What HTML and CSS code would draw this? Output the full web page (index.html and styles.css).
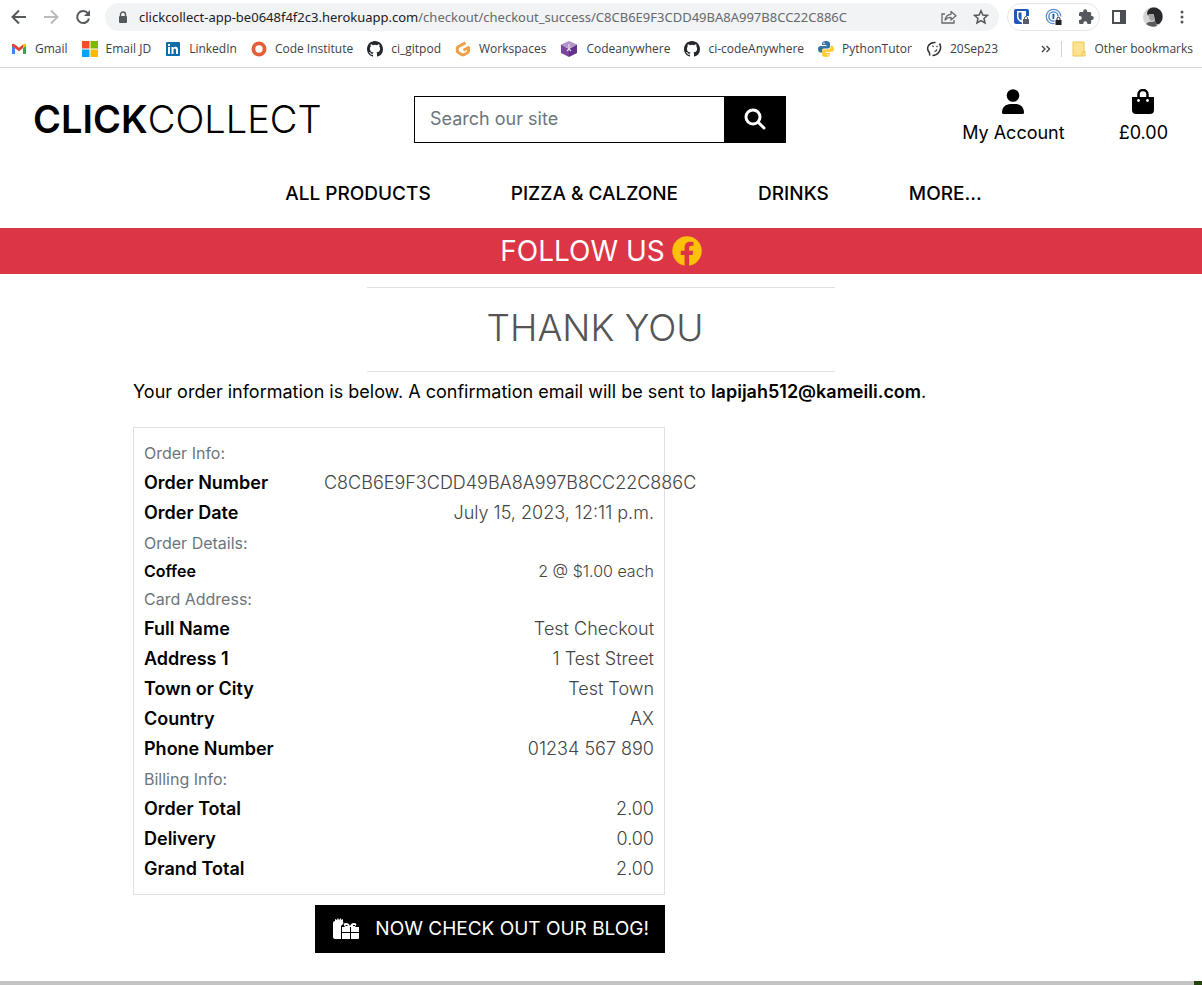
FILE: index.html
```html
<!DOCTYPE html>
<html lang="en">
<head>
<meta charset="utf-8">
<meta name="viewport" content="width=device-width, initial-scale=1">
<title>Click Collect - Checkout success</title>
<link rel="stylesheet" href="styles.css">
</head>
<body>
<div class="browser">
  <div class="toolbar">
    <div class="nav-buttons">
      <button type="button" class="tool" aria-label="Back"><svg width="16" height="16" viewBox="0 0 16 16" fill="none" stroke="#55585c" stroke-width="2"><path d="M15 8H2M8 1.500L1.500 8L8 14.500"/></svg></button>
      <button type="button" class="tool" aria-label="Forward"><svg width="16" height="16" viewBox="0 0 16 16" fill="none" stroke="#b9bbbe" stroke-width="2"><path d="M1 8H14M8 1.500L14.500 8L8 14.500"/></svg></button>
      <button type="button" class="tool" aria-label="Reload"><svg width="16" height="16" viewBox="0 0 16 16"><path d="M13 4.500A6 6 0 1 0 14 9.500" fill="none" stroke="#55585c" stroke-width="2"/><path d="M15 1V7H9Z" fill="#55585c"/></svg></button>
    </div>
    <div class="address">
      <svg width="10" height="13" viewBox="0 0 10 13"><rect x="1" y="5" width="8" height="7" rx="1" fill="#55585c"/><path d="M2.500 6V3.500a2.500 2.500 0 0 1 5 0V6" fill="none" stroke="#55585c" stroke-width="1.400"/></svg>
      <span class="url"><span class="host">clickcollect-app-be0648f4f2c3.herokuapp.com</span>/checkout/checkout_success/C8CB6E9F3CDD49BA8A997B8CC22C886C</span>
      <button type="button" class="tool" aria-label="Share"><svg width="16" height="16" viewBox="0 0 16 16" fill="none" stroke="#66696d" stroke-width="1.300"><path d="M4 5H1V14H13V11"/><path d="M4 11C4.500 7.500 6.500 5.500 10 5.300V2.500L15 6.800L10 11V8.300C7.500 8.300 5.500 9 4 11Z" stroke-linejoin="round"/></svg></button>
      <button type="button" class="tool" aria-label="Bookmark this page"><svg width="16" height="16" viewBox="0 0 16 16" fill="none" stroke="#55585c" stroke-width="1.500"><path d="M8 1.800L9.900 6L14.400 6.400L11 9.400L12 13.900L8 11.500L4 13.900L5 9.400L1.600 6.400L6.100 6Z"/></svg></button>
    </div>
    <div class="extensions">
      <button type="button" class="tool" aria-label="Bitwarden"><svg width="18" height="18" viewBox="0 0 18 18"><rect x="1" y="1" width="15" height="15" rx="2" fill="#2456b4"/><path d="M4 3H13V9Q13 12 8.500 14.500Q4 12 4 9Z" fill="#fff"/><path d="M5.500 4.500H8.500V12.500Q5.500 11 5.500 9Z" fill="#2456b4"/><rect x="9" y="8" width="8" height="9" fill="#fff"/><rect x="10" y="11" width="6" height="5" fill="#555b68"/><path d="M11.500 11V10a1.500 1.500 0 0 1 3 0V11" fill="none" stroke="#555b68"/></svg></button>
      <button type="button" class="tool" aria-label="1Password"><svg width="18" height="18" viewBox="0 0 18 18"><circle cx="8.500" cy="8.500" r="7.200" fill="#fff" stroke="#5b8fd0" stroke-width="1.300"/><circle cx="8.500" cy="8.500" r="4.600" fill="#fff" stroke="#3c7cca" stroke-width="1.300"/><path d="M8.500 5.800V11" stroke="#1c57a0" stroke-width="2"/><rect x="9.500" y="8.500" width="8" height="9" fill="#fff"/><rect x="10.500" y="12" width="6" height="5" fill="#202124"/><path d="M12 12V10.800a1.500 1.500 0 0 1 3 0V12" fill="none" stroke="#202124"/></svg></button>
      <button type="button" class="tool" aria-label="Extensions"><svg width="18" height="18" viewBox="0 0 18 18" fill="#55585c"><path d="M2 5.500Q2 4 3.500 4H6.200V3.200A2 2 0 0 1 10.200 3.200V4H13Q14.200 4 14.200 5.500V8H14.800A2 2 0 0 1 14.800 12H14.200V14.500Q14.200 16 13 16H10.300V15.200A2 2 0 0 0 6.300 15.200V16H3.500Q2 16 2 14.500V12H2.800A2 2 0 0 0 2.800 8H2Z"/></svg></button>
    </div>
    <div class="window-tools">
      <button type="button" class="tool" aria-label="Side panel"><svg width="14" height="14" viewBox="0 0 14 14"><rect x="1" y="1" width="12" height="12" fill="#fff" stroke="#4b4e52" stroke-width="2"/><path d="M8 1H13V13H8Z" fill="#4b4e52"/></svg></button>
      <button type="button" class="tool" aria-label="Profile"><svg width="20" height="20" viewBox="0 0 20 20"><circle cx="10" cy="10" r="10" fill="#d6d6d6"/><path d="M4 6Q5 1 10 0.500Q16 0 19 6Q21 13 16 17Q13 18 12 14L10.500 7L6 7L5 9Z" fill="#29292b"/><path d="M6 7L10.500 7L12 12L9 14Q6 13 6 10Z" fill="#a3a3a3"/><path d="M3 17Q6 14 9 15L12 14L14 19Q8 21 3 17Z" fill="#5c5c5c"/></svg></button>
      <button type="button" class="tool" aria-label="Menu"><svg width="4" height="14" viewBox="0 0 4 14" fill="#55585c"><circle cx="2" cy="2" r="1.500"/><circle cx="2" cy="7" r="1.500"/><circle cx="2" cy="12" r="1.500"/></svg></button>
    </div>
  </div>
  <nav class="bookmarks" aria-label="Bookmarks">
    <a href="#"><svg width="16" height="16" viewBox="0 0 16 16"><path d="M1 3.500V13H4V7Z" fill="#4285f4"/><path d="M15 3.500V13H12V7Z" fill="#34a853"/><path d="M1 3.500Q2 2 4 3.500L8 6.800L12 3.500V7L8 10.300L1 5Z" fill="#e04335"/><path d="M12 3.500Q14 2 15 3.500V5L12 7.300Z" fill="#fbbc04"/></svg>Gmail</a>
    <a href="#"><svg width="16" height="16" viewBox="0 0 16 16"><path d="M0 0H7.500V7.500H0Z" fill="#f25022"/><path d="M8.500 0H16V7.500H8.500Z" fill="#7fba00"/><path d="M0 8.500H7.500V16H0Z" fill="#00a4ef"/><path d="M8.500 8.500H16V16H8.500Z" fill="#ffb900"/></svg>Email JD</a>
    <a href="#"><svg width="16" height="16" viewBox="0 0 16 16"><rect x="1" y="1" width="14" height="14" rx="1" fill="#0a6fa8"/><path d="M3 6H5V13H3ZM3 3H5V5H3ZM6.500 6H8.500V7Q9.200 5.800 10.600 5.800Q13 5.800 13 8.800V13H11V9.200Q11 7.600 9.900 7.600Q8.500 7.600 8.500 9.300V13H6.500Z" fill="#fff"/></svg>LinkedIn</a>
    <a href="#"><svg width="16" height="16" viewBox="0 0 16 16"><circle cx="8" cy="8" r="5.600" fill="none" stroke="#e25f38" stroke-width="3.800"/></svg>Code Institute</a>
    <a href="#"><svg width="16" height="16" viewBox="0 0 16 16"><use href="#octocat"/></svg>ci_gitpod</a>
    <a href="#"><svg width="16" height="16" viewBox="0 0 16 16"><path d="M10.500 1.800L3.500 5.500Q2.300 6.200 2.300 7.500V10Q2.300 11 3.300 11.500L7 13.700Q8 14.200 9 13.700L12.500 11.700Q13.500 11 13.500 10V6.500L8.500 9.300" fill="none" stroke="#eda04c" stroke-width="3" stroke-linejoin="round"/></svg>Workspaces</a>
    <a href="#"><svg width="18" height="16" viewBox="0 0 18 16"><path d="M9 0L17 3.500L9 7.500L1 3.500Z" fill="#b394c8"/><path d="M1 3.500L9 8V16L1 12Z" fill="#7c459c"/><path d="M17 3.500L9 8V16L17 12Z" fill="#63318a"/><path d="M9 3V9M9 8L7 10M9 8L11 10" stroke="#e6dbee" stroke-width="1.200"/></svg>Codeanywhere</a>
    <a href="#"><svg width="16" height="16" viewBox="0 0 16 16"><use href="#octocat"/></svg>ci-codeAnywhere</a>
    <a href="#"><svg width="16" height="16" viewBox="0 0 16 16"><path d="M8 0Q4 0 4 2.500V4H8.500V5H3Q0 5 0 8Q0 11.500 3 11.500H4V9.500Q4 7.500 6 7.500H10Q12 7.500 12 5.500V2.500Q12 0 8 0Z" fill="#3571a3"/><path d="M8 16Q12 16 12 13.500V12H7.500V11H13Q16 11 16 8Q16 4.500 13 4.500H12.500V6.500Q12.500 8.300 10.500 8.300H6Q4 8.300 4 10.500V13.500Q4 16 8 16Z" fill="#ffce3c"/><circle cx="6" cy="2.200" r=".8" fill="#fff"/><circle cx="10" cy="13.800" r=".8" fill="#fff"/></svg>PythonTutor</a>
    <a href="#"><svg width="16" height="16" viewBox="0 0 16 16" fill="none" stroke="#303236" stroke-width="1.500"><path d="M9.500 1.500Q5 1 2.500 4.500Q0.500 8 3 11Q4 12.500 3.500 14.500"/><path d="M13.500 2.500Q16 6.500 13 11Q10.500 14.500 6.500 14.500"/><path d="M6.500 4.500L7.500 6M10.500 5L11.500 6M8.500 10.500Q10.500 10 11 8.500" stroke-width="1.100"/></svg>20Sep23</a>
    <button type="button" class="more-bookmarks" aria-label="More bookmarks"><svg width="10" height="10" viewBox="0 0 10 10" fill="none" stroke="#44474b" stroke-width="1.400"><path d="M1 2L4 5L1 8M5.500 2L8.500 5L5.500 8"/></svg></button>
    <a href="#" class="other"><svg width="14" height="16" viewBox="0 0 14 16"><path d="M1 1H12V10H13V15H1Z" fill="#fde293" stroke="#edc852"/><path d="M10 15V11H13" fill="none" stroke="#edc852"/></svg>Other bookmarks</a>
  </nav>
</div>

<svg class="sprite" aria-hidden="true"><symbol id="octocat" viewBox="0 0 16 16"><path fill="#24272b" d="M8 0C3.580 0 0 3.580 0 8c0 3.540 2.290 6.530 5.470 7.590.4.070.55-.17.55-.38 0-.19-.01-.82-.01-1.490-2.010.37-2.530-.49-2.690-.94-.09-.23-.48-.94-.82-1.130-.28-.15-.68-.52-.01-.53.63-.01 1.080.58 1.230.82.72 1.210 1.870.87 2.330.66.07-.52.28-.87.51-1.070-1.780-.2-3.640-.89-3.640-3.950 0-.87.31-1.590.82-2.150-.08-.2-.36-1.020.08-2.120 0 0 .67-.21 2.200.82a7.600 7.600 0 0 1 4 0c1.530-1.040 2.200-.82 2.200-.82.44 1.100.16 1.920.08 2.120.51.56.82 1.270.82 2.150 0 3.070-1.870 3.750-3.650 3.950.29.25.54.73.54 1.480 0 1.070-.01 1.930-.01 2.200 0 .21.15.46.55.38A8 8 0 0 0 16 8c0-4.420-3.580-8-8-8z"/></symbol></svg>

<header class="site-header">
  <div class="masthead">
    <a href="#" class="logo"><strong>CLICK</strong>COLLECT</a>
    <form class="search" role="search">
      <input type="search" aria-label="Search our site" placeholder="Search our site">
      <button type="button" aria-label="Search"><svg width="22" height="22" viewBox="0 0 22 22" fill="none" stroke="#fff" stroke-width="3" stroke-linecap="round"><circle cx="9" cy="9" r="7"/><path d="M14.500 14.500L20 20"/></svg></button>
    </form>
    <div class="account">
      <a href="#"><svg width="22" height="26" viewBox="0 0 22 26"><circle cx="11" cy="6.500" r="6.300"/><path d="M0 23.500C0 18.500 3.500 15 8.500 15H13.500C18.500 15 22 18.500 22 23.500Q22 25 20.500 25H1.500Q0 25 0 23.500Z"/></svg>My Account</a>
      <a href="#"><svg width="22" height="26" viewBox="0 0 22 26"><path d="M0 8H22V21Q22 25 18 25H4Q0 25 0 21Z"/><path d="M6.500 11V5.500a4.500 4.500 0 0 1 9 0V11" fill="none" stroke="#000" stroke-width="2.500"/><circle cx="6.500" cy="11.500" r="1.400" fill="#fff"/><circle cx="15.500" cy="11.500" r="1.400" fill="#fff"/></svg>£0.00</a>
    </div>
  </div>
  <nav class="main-nav" aria-label="Main">
    <a href="#">ALL PRODUCTS</a>
    <a href="#">PIZZA &amp; CALZONE</a>
    <a href="#">DRINKS</a>
    <a href="#">MORE...</a>
  </nav>
</header>

<div class="follow">
  <span>FOLLOW US</span>
  <a href="#" aria-label="Facebook"><svg width="30" height="30" viewBox="0 0 30 30"><circle cx="15" cy="15" r="14.700" fill="#ffc107"/><path d="M12.600 30V19H8.800V14.800H12.600V11.600C12.600 7.800 14.800 5.800 18.200 5.800Q20 5.800 21.500 6.100V9.700H19.500C17.600 9.700 17.100 10.800 17.100 12V14.800H21.300L20.600 19H17.100V30Z" fill="#dc3545"/></svg></a>
</div>

<main class="content">
  <h1>THANK YOU</h1>
  <p class="intro">Your order information is below. A confirmation email will be sent to <strong>lapijah512@kameili.com</strong>.</p>
  <div class="order-column">
    <section class="order">
      <h2>Order Info:</h2>
      <dl>
        <div><dt>Order Number</dt><dd>C8CB6E9F3CDD49BA8A997B8CC22C886C</dd></div>
        <div><dt>Order Date</dt><dd>July 15, 2023, 12:11 p.m.</dd></div>
      </dl>
      <h2>Order Details:</h2>
      <dl class="items">
        <div><dt>Coffee</dt><dd>2 @ $1.00 each</dd></div>
      </dl>
      <h2>Card Address:</h2>
      <dl>
        <div><dt>Full Name</dt><dd>Test Checkout</dd></div>
        <div><dt>Address 1</dt><dd>1 Test Street</dd></div>
        <div><dt>Town or City</dt><dd>Test Town</dd></div>
        <div><dt>Country</dt><dd>AX</dd></div>
        <div><dt>Phone Number</dt><dd>01234 567 890</dd></div>
      </dl>
      <h2>Billing Info:</h2>
      <dl>
        <div><dt>Order Total</dt><dd>2.00</dd></div>
        <div><dt>Delivery</dt><dd>0.00</dd></div>
        <div><dt>Grand Total</dt><dd>2.00</dd></div>
      </dl>
    </section>
    <a href="#" class="blog"><svg width="26" height="22" viewBox="0 0 26 22" fill="#fff"><path d="M0 5Q0 3 2 3L2 1L4 2L5 0L6 2L8 0V2L10 1V4Q11 5 10 6L8 8V21H2Q0 21 0 19Z"/><path d="M9 9H12Q9 5 13 5Q16 5 17 8Q18 5 21 5Q25 5 22 9H26V14H18V9H17V14H9ZM9 15H17V21H9ZM18 15H26V20Q26 21 25 21H18Z"/><path d="M12.500 7.500H14.500M20 7.500H22" stroke="#000"/></svg>NOW CHECK OUT OUR BLOG!</a>
  </div>
</main>
<footer class="edge"><span></span></footer>
</body>
</html>
```

FILE: styles.css
```css
* { box-sizing: border-box; }

body {
  margin: 0;
  min-height: 100vh;
  display: flex;
  flex-direction: column;
  background: #fff;
  color: #000;
  font: 300 18px/30px Inter, "Liberation Sans", sans-serif;
}

a { color: inherit; text-decoration: none; }
svg { display: block; flex: none; }
h1, h2, p, dl, dt, dd { margin: 0; }
.sprite { position: absolute; width: 0; height: 0; }

/* Browser bars */
.browser {
  border-bottom: 1px solid #d5d7da;
  font: 400 12px/16px "Open Sans", "Noto Sans", sans-serif;
  color: #3c4043;
}
.toolbar { display: flex; align-items: center; padding: 3px 18px 0 11px; }
.tool { display: block; padding: 0; border: 0; background: none; }
.nav-buttons { display: flex; gap: 16px; width: 94px; }
.address {
  flex: 1;
  min-width: 0;
  display: flex;
  align-items: center;
  gap: 16px;
  height: 28px;
  padding: 0 10px 0 13px;
  border-radius: 14px;
  background: #f1f3f4;
}
.url {
  flex: 1;
  min-width: 0;
  overflow: hidden;
  white-space: nowrap;
  margin-left: -5px;
  font-family: "Noto Sans", "Open Sans", sans-serif;
  font-size: 13px;
  line-height: 20px;
  color: #66696d;
}
.host { color: #202124; }
.extensions {
  display: flex;
  align-items: center;
  gap: 14px;
  height: 28px;
  margin: 0 12px 0 8px;
  padding: 0 4px 0 5px;
  border: 1px solid #e4e6e9;
  border-radius: 14px;
}
.window-tools { display: flex; align-items: center; gap: 17px; }
.bookmarks {
  display: flex;
  align-items: center;
  gap: 14px;
  height: 36px;
  padding: 0 9px 0 11px;
  white-space: nowrap;
}
.bookmarks a { display: flex; align-items: center; gap: 8px; }
.more-bookmarks { margin-left: auto; padding: 0; border: 0; background: none; }
.bookmarks .other { margin-left: -4px; padding-left: 10px; border-left: 1px solid #cfd1d4; }

/* Site header */
.site-header { padding: 20px 34px 19px 33px; }
.masthead { display: grid; grid-template-columns: 381px 372px 1fr; align-items: center; }
.logo { font-size: 38px; line-height: 46px; }
.logo strong { font-weight: 600; }
.search { display: flex; height: 47px; border: 1px solid #000; }
.search input {
  flex: 1;
  min-width: 0;
  padding: 0 15px;
  border: 0;
  border-radius: 0;
  background: #fff;
  font: inherit;
  font-weight: 400;
  appearance: none;
}
.search input::placeholder { color: #6c757d; opacity: 1; }
.search button {
  display: grid;
  place-items: center;
  width: 61px;
  border: 0;
  background: #000;
}
.account { display: flex; justify-content: flex-end; gap: 54px; font-weight: 400; }
.account a { display: flex; flex-direction: column; align-items: center; gap: 3px; padding: 1px 0 2px; }
.main-nav {
  display: flex;
  justify-content: center;
  gap: 80px;
  padding: 29px 0 0 66px;
  font-size: 19px;
  font-weight: 500;
}

.follow {
  display: flex;
  justify-content: center;
  align-items: center;
  gap: 7px;
  height: 46px;
  background: #dc3545;
  color: #fff;
  font-size: 28px;
  font-weight: 400;
}

/* Checkout summary */
.content { flex: 1; padding: 13px 133px 28px; }
h1 {
  width: 50%;
  min-width: 320px;
  margin: 0 auto 5px;
  padding: 16px 12px 20px 0;
  border: 1px solid #dee2e6;
  border-width: 1px 0;
  color: #555;
  font-size: 37px;
  font-weight: 300;
  line-height: 47px;
  text-align: center;
}
.intro { margin-bottom: 20px; font-weight: 400; }
.intro strong { font-weight: 600; }
.order-column { max-width: 532px; }
.order { padding: 10px; border: 1px solid #dee2e6; }
h2 { color: #6c757d; font-size: 16px; font-weight: 400; line-height: 30px; }
.order dl > div { display: grid; grid-template-columns: 180px minmax(0, 1fr); }
.order dt { font-weight: 600; }
.order dd { color: #444; text-align: right; white-space: nowrap; }
.order .items { font-size: 16px; line-height: 26px; }
.blog {
  display: flex;
  align-items: center;
  gap: 16px;
  width: fit-content;
  height: 48px;
  margin: 10px 0 0 auto;
  padding: 0 16px 0 18px;
  background: #000;
  color: #fff;
  font-size: 19px;
  font-weight: 400;
}
.edge { display: flex; justify-content: flex-end; height: 4px; background: #c3c3c3; }
.edge span { width: 8px; background: #25420f; }
```
